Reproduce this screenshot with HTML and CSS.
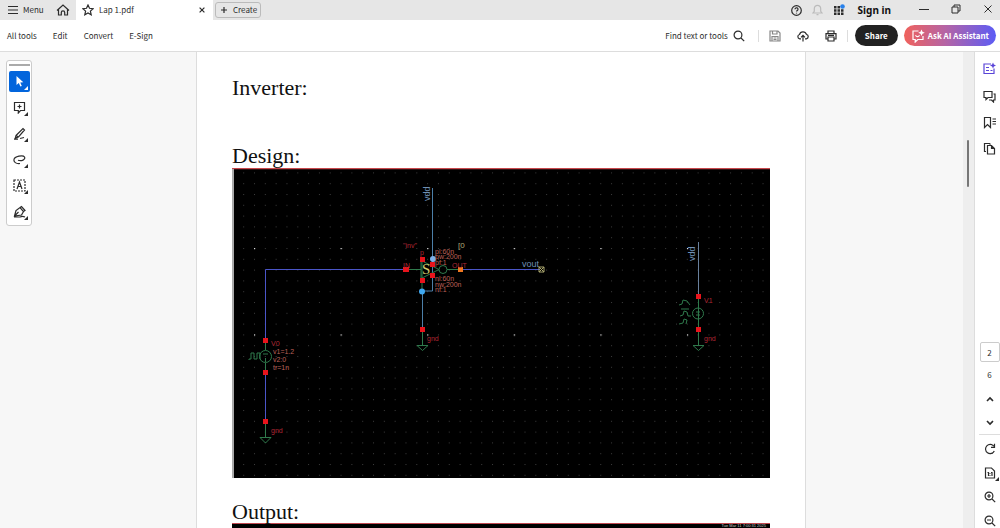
FILE: index.html
```html
<!DOCTYPE html>
<html lang="en">
<head>
    <meta charset="UTF-8">
    <meta name="viewport" content="width=device-width, initial-scale=1.0">
    <title>Lap 1.pdf</title>
    <link rel="stylesheet" href="styles.css">
</head>
<body>
    <header class="titlebar">
        <div class="app-menu">
            <button class="menu-btn">
                <svg width="10" height="10" viewBox="0 0 10 10"><path d="M0 1.500h10M0 5h10M0 8.500h10"/></svg>
                Menu
            </button>
            <button class="icon-btn" aria-label="Home">
                <svg width="14" height="14" viewBox="0 0 14 14"><path d="M1 7.500 7 2l6 5.500M2.500 6.500V12H5.300V9.500a1.700 1.700 0 0 1 3.400 0V12h2.800V6.500"/></svg>
            </button>
        </div>
        <div class="tab">
            <svg width="12" height="12" viewBox="0 0 12 12"><path d="m6 1 1.500 3.300 3.600.4-2.700 2.400.8 3.600L6 8.900l-3.200 1.800.8-3.600L.9 4.700l3.600-.4z"/></svg>
            <span class="tab-name">Lap 1.pdf</span>
            <button class="icon-btn" aria-label="Close tab">
                <svg width="6" height="6" viewBox="0 0 6 6"><path d="m.6.6 4.800 4.800M5.400.6.6 5.400"/></svg>
            </button>
        </div>
        <button class="create-btn">
            <svg width="8" height="8" viewBox="0 0 8 8"><path d="M4 1v6M1 4h6"/></svg>
            Create
        </button>
        <div class="account">
            <button class="icon-btn" aria-label="Help">
                <svg width="11" height="11" viewBox="0 0 11 11"><circle cx="5.500" cy="5.500" r="4.800"/><path d="M4 4.300a1.500 1.500 0 1 1 2.200 1.300c-.5.3-.7.5-.7 1M5.500 7.700v.8"/></svg>
            </button>
            <button class="icon-btn muted" aria-label="Notifications">
                <svg width="11" height="12" viewBox="0 0 11 12"><path d="M1 9h9L8.700 7.300V4.500a3.200 3.200 0 0 0-6.400 0v2.800zM4.500 10.700h2"/></svg>
            </button>
            <button class="icon-btn" aria-label="Apps">
                <svg class="solid" width="12" height="12" viewBox="0 0 12 12"><path d="M1 2h2.500v2.500H1zM4.500 2H7v2.500H4.500zM1 5.300h2.500v2.500H1zM4.500 5.300H7v2.500H4.500zM8 5.300h2.500v2.500H8zM1 8.600h2.500v2.500H1zM4.500 8.600H7v2.500H4.500zM8 8.600h2.500v2.500H8z"/><circle class="dot" cx="9.500" cy="2.500" r="2.300"/></svg>
            </button>
            <button class="sign-in">Sign in</button>
        </div>
        <div class="window-controls">
            <button class="icon-btn" aria-label="Minimize"><svg width="10" height="10" viewBox="0 0 10 10"><path d="M0 5.500h10"/></svg></button>
            <button class="icon-btn" aria-label="Restore"><svg width="10" height="10" viewBox="0 0 10 10"><path d="M1 3h6v6H1zM3 3V1h6v6H7"/></svg></button>
            <button class="icon-btn" aria-label="Close"><svg width="10" height="10" viewBox="0 0 10 10"><path d="m1.500 1.500 7 7M8.500 1.500l-7 7"/></svg></button>
        </div>
    </header>

    <nav class="toolbar">
        <div class="menus">
            <button>All tools</button>
            <button>Edit</button>
            <button>Convert</button>
            <button>E-Sign</button>
        </div>
        <button class="find-btn">
            Find text or tools
            <svg width="12" height="12" viewBox="0 0 12 12"><circle cx="5" cy="5" r="3.900"/><path d="m8 8 3.200 3.200"/></svg>
        </button>
        <div class="file-actions">
            <button class="icon-btn faded" aria-label="Save">
                <svg width="12" height="12" viewBox="0 0 12 12"><path d="M1 1h8l2 2v8H1zM3.500 1v3h4.500V1M3 11V6.500h6V11M4.500 8h3M4.500 9.500h3"/></svg>
            </button>
            <button class="icon-btn" aria-label="Upload">
                <svg width="12" height="12" viewBox="0 0 12 12"><path d="M4 8.800H2.700a2.200 2.200 0 0 1-.2-4.300 3.600 3.600 0 0 1 6.900-.2 2.300 2.300 0 0 1 0 4.500H8M6 11.500V5.500M4 7.400l2-2 2 2"/></svg>
            </button>
            <button class="icon-btn" aria-label="Print">
                <svg width="12" height="12" viewBox="0 0 12 12"><path d="M3 3.500V1h6v2.500M3 9H1V3.700h10V9H9M3 7h6v4H3zM3 5.300h6"/></svg>
            </button>
        </div>
        <button class="share-btn">Share</button>
        <button class="ai-btn">
            <svg width="14" height="14" viewBox="0 0 14 14"><path d="M7.500 2H2v8.500h2.200V13l2.600-2.500H12V7M4.500 6.200c1 2 3 2 4 0"/><path class="fill" d="m10.500.5 1 2.300 2.300 1-2.300 1-1 2.300-1-2.300-2.300-1 2.300-1z"/></svg>
            Ask AI Assistant
        </button>
    </nav>

    <main class="workspace">
        <aside class="quick-tools">
            <div class="palette">
                <div class="grip"></div>
                <button class="tool active" aria-label="Select">
                    <svg class="solid" width="13" height="13" viewBox="0 0 13 13"><path d="M3.500 1v9l2.300-2 1.600 3.500 1.400-.6L7.300 7.500l3-.3z"/></svg>
                </button>
                <button class="tool" aria-label="Add comment">
                    <svg width="13" height="13" viewBox="0 0 13 13"><path d="M1.500 1.500h10v8H7.500L5.300 12V9.500H1.500zM6.500 3.500v4M4.500 5.500h4"/></svg>
                </button>
                <button class="tool" aria-label="Highlight">
                    <svg width="13" height="13" viewBox="0 0 13 13"><path d="m3 8.500 7-7 1.500 1.500-6 7-3.200 1zM3 8.500 5.500 10M1 12.200h4M7 11.500l4-1"/></svg>
                </button>
                <button class="tool" aria-label="Draw">
                    <svg width="13" height="13" viewBox="0 0 13 13"><path d="M7 10.500C3 11 .5 9 1 6.500 1.500 3.500 10 1.500 11.500 4c1.300 2.700-3 4.500-6.500 3.300"/></svg>
                </button>
                <button class="tool" aria-label="Add text">
                    <svg width="13" height="13" viewBox="0 0 13 13"><path class="dashed" d="M1 1h11v11H1z"/><path d="m4 10 2.500-7L9 10M5 7.500h3"/></svg>
                </button>
                <button class="tool" aria-label="Sign">
                    <svg width="13" height="13" viewBox="0 0 13 13"><path d="M1.500 11 3 5.500 7 2.500l3.500 4-2 3.500zM1.500 11l4-4M7 2.500l1.500-1 3.500 4-1.500 1M1 12h6c2-1 3-1 5 0"/></svg>
                </button>
            </div>
        </aside>

        <section class="canvas">
            <article class="page">
                <h2>Inverter:</h2>
                <h2 class="spaced">Design:</h2>
                <figure class="schematic">
                    <svg viewBox="232 168 538 310" role="img" aria-label="Inverter schematic">
                        <defs>
                            <pattern id="grid" x="254" y="248" width="10.820" height="10.800" patternUnits="userSpaceOnUse"><rect width="1" height="1" fill="#3c3c3c"/></pattern>
                            <pattern id="major" x="254" y="248" width="86.600" height="86.400" patternUnits="userSpaceOnUse"><rect width="1.200" height="1.200" fill="#ddd"/></pattern>
                        </defs>
                        <rect x="232" y="168" width="538" height="310" fill="#000"/>
                        <rect x="236" y="172" width="532" height="304" fill="url(#grid)"/>
                        <rect x="250" y="240" width="510" height="100" fill="url(#major)"/>
                        <path d="M232 168.500h538" stroke="#c8474c" stroke-width="1.500"/>
                        <path d="M233 169v309" stroke="#aaa" stroke-width="2"/>

                        <!-- wires -->
                        <g class="wire">
                            <path d="M265.500 340v-70.500H405M460 269.500h80M265.500 373v48"/>
                            <path class="light" d="M432.500 188v71M422.500 292v37M432.500 259v32h-11"/>
                            <path class="pale" d="M698.500 242v54"/>
                        </g>

                        <!-- symbols -->
                        <g class="symbol">
                            <path d="M265.500 340v10M265.500 363v8M265.500 421v16M260 437.500h11l-5.500 5.500zM249 360v-1h2v-6h3v6h3v-6h3v6"/>
                            <circle cx="265.500" cy="356.500" r="6"/>
                            <path d="M263 354h5M265.500 358v4"/>
                            <path d="M405 269.500h16M421 261v17M422 259v33M422 261l17 8.500-17 8.500M447 269.500h13"/>
                            <circle cx="443" cy="269.500" r="4"/>
                            <path d="M422.500 329v16M417 345.500h11l-5.500 5z"/>
                            <path d="M698.500 296v33M698.500 329v16M693 345.500h11l-5.500 5z"/>
                            <circle cx="698" cy="313.500" r="5.500"/>
                            <path d="M696 312h4M696 315h4M679 305l3-1 1-4 4 1 3 4M681 309h8M680 316l3-1 1-4 3 1 1 4h3M679 324l4-1 1-4 3 1-1 4"/>
                        </g>

                        <!-- pins -->
                        <g class="pin">
                            <path d="M263 338h5v5h-5zM263 370h5v5h-5zM263 419h5v5h-5zM403 267h6v5h-6zM420 257h5v5h-5zM430 262h5v5h-5zM430 273h5v5h-5zM420 278h5v5h-5zM420 327h5v5h-5zM696 294h5v5h-5zM696 327h5v5h-5z"/>
                            <path class="orange" d="M458 267h5v5h-5z"/>
                        </g>
                        <circle cx="433" cy="259" r="3" fill="#7db0ea"/>
                        <circle cx="422" cy="291.500" r="3" fill="#3fa8f0"/>
                        <path class="terminal" d="M539 267h5v5h-5zM539 267l5 5M544 267l-5 5"/>

                        <!-- labels -->
                        <g class="net">
                            <text transform="translate(430 201) rotate(-90)">vdd</text>
                            <text transform="translate(695 261) rotate(-90)">vdd</text>
                            <text x="522" y="267">vout</text>
                        </g>
                        <g class="param">
                            <text x="273" y="354">v1=1.2</text>
                            <text x="273" y="362">v2:0</text>
                            <text x="273" y="370">tr=1n</text>
                            <text x="435" y="254">pl:60n</text>
                            <text x="435" y="259">pw:200n</text>
                            <text x="435" y="265">pf:1</text>
                            <text x="435" y="281">nl:60n</text>
                            <text x="435" y="287">nw:200n</text>
                            <text x="435" y="292">nf:1</text>
                        </g>
                        <g class="name">
                            <text x="271" y="346">V0</text>
                            <text x="271" y="433">gnd</text>
                            <text x="403" y="248">"inv"</text>
                            <text x="420" y="255">p</text>
                            <text x="403" y="268">IN</text>
                            <text x="452" y="268">OUT</text>
                            <text x="427" y="341">gnd</text>
                            <text x="704" y="303">V1</text>
                            <text x="704" y="341">gnd</text>
                        </g>
                        <text class="size" x="422" y="274">S</text>
                        <text class="index" x="458" y="248">[0</text>
                    </svg>
                </figure>
                <h2 class="after-figure">Output:</h2>
                <figure class="waveform"><figcaption>Tue Mar 11 7:00:31 2025</figcaption></figure>
            </article>
        </section>

        <div class="scrollbar"><div class="thumb"></div></div>

        <aside class="rail">
            <div class="panels">
                <button class="icon-btn ai" aria-label="AI summary">
                    <svg width="13" height="13" viewBox="0 0 13 13"><path d="M8 2H1v9.500h10V6.500M3 5.500h3M3 8.500h3M7.500 8.500h2"/><path class="fill" d="m10 .5.900 2.100 2.100.9-2.100.9L10 6.500l-.9-2.100L7 3.500l2.100-.9z"/></svg>
                </button>
                <button class="icon-btn" aria-label="Comments">
                    <svg width="13" height="13" viewBox="0 0 13 13"><path d="M1 1.500h8v6H5L3 9.500v-2H1zM10.500 4H12v6h-1.500v2l-2-2H6"/></svg>
                </button>
                <button class="icon-btn" aria-label="Bookmarks">
                    <svg width="13" height="13" viewBox="0 0 13 13"><path d="M1.500 1.500h6v10l-3-3-3 3zM9.500 3H13M9.500 5.500H13M9.500 8H13"/></svg>
                </button>
                <button class="icon-btn" aria-label="Pages">
                    <svg width="13" height="13" viewBox="0 0 13 13"><path d="M4.500 3.500h4l3 3V12h-7zM8.500 3.500v3h3M3 9.500H1.500v-8h5l1 1"/></svg>
                </button>
            </div>
            <div class="page-nav">
                <input type="text" value="2" aria-label="Page number">
                <span class="total">6</span>
                <button class="icon-btn" aria-label="Previous page"><svg class="bold" width="8" height="8" viewBox="0 0 8 8"><path d="m1 6 3-3 3 3"/></svg></button>
                <button class="icon-btn" aria-label="Next page"><svg class="bold" width="8" height="8" viewBox="0 0 8 8"><path d="m1 3 3 3 3-3"/></svg></button>
                <div class="view">
                    <button class="icon-btn" aria-label="Rotate"><svg width="12" height="12" viewBox="0 0 12 12"><path d="M10.300 8A4.600 4.600 0 1 1 9.800 3.200M10.500.8v3.500H7"/></svg></button>
                    <button class="icon-btn corner" aria-label="Fit page"><svg width="12" height="12" viewBox="0 0 12 12"><path d="M1.500 1h6l3 3v7h-9zM3.500 5.500h1V9M7 5.500h1V9M6 6v.8M6 8v.8"/></svg></button>
                    <button class="icon-btn" aria-label="Zoom in"><svg width="12" height="12" viewBox="0 0 12 12"><circle cx="5" cy="5" r="3.900"/><path d="m8 8 3.200 3.200M5 3v4M3 5h4"/></svg></button>
                    <button class="icon-btn" aria-label="Zoom out"><svg width="12" height="12" viewBox="0 0 12 12"><circle cx="5" cy="5" r="3.900"/><path d="m8 8 3.200 3.200M3 5h4"/></svg></button>
                </div>
            </div>
        </aside>
    </main>
</body>
</html>
```

FILE: styles.css
```css
* {
    box-sizing: border-box;
}
body {
    margin: 0;
    height: 100vh;
    display: flex;
    flex-direction: column;
    overflow: hidden;
    font-family: "Noto Sans CJK SC", "Open Sans", sans-serif;
    font-size: 8px;
    line-height: 12px;
    color: #2c2c2c;
    background: white;
}
button {
    display: flex;
    align-items: center;
    padding: 0;
    border: none;
    background: none;
    font: inherit;
    color: inherit;
    white-space: nowrap;
    cursor: pointer;
}
svg {
    display: block;
    flex: none;
    fill: none;
    stroke: currentColor;
    stroke-width: 1.2;
}
svg.solid,
svg .fill {
    fill: currentColor;
    stroke: none;
}
svg.bold {
    stroke-width: 1.6;
}
.icon-btn {
    justify-content: center;
}

/* title bar */
.titlebar {
    display: flex;
    align-items: center;
    flex: none;
    height: 20px;
    background: #e6e6e6;
}
.app-menu {
    display: flex;
    align-items: center;
    justify-content: space-between;
    width: 76px;
    padding: 0 6px 0 8px;
}
.menu-btn {
    gap: 5px;
}
.tab {
    display: flex;
    align-items: center;
    gap: 5px;
    width: 137px;
    height: 20px;
    padding: 0 8px 0 6px;
    background: white;
}
.tab-name {
    flex: 1;
}
.create-btn {
    gap: 5px;
    height: 16px;
    margin-left: 2px;
    padding: 0 3px 0 4px;
    border: 1px solid #bbb;
    border-radius: 3px;
}
.account {
    display: flex;
    align-items: center;
    gap: 10px;
    margin-left: auto;
}
.muted {
    color: #bbb;
}
.dot {
    fill: #2680eb;
}
.sign-in {
    margin-left: 3px;
    font-family: "Noto Sans", sans-serif;
    font-size: 10px;
    font-weight: bold;
    color: #111;
}
.window-controls {
    display: flex;
    gap: 22px;
    margin-left: 28px;
    padding: 0 7px 2px 0;
}
.window-controls svg {
    stroke-width: 1;
}

/* toolbar */
.toolbar {
    display: flex;
    align-items: center;
    flex: none;
    height: 32px;
    padding: 0 4px 0 7px;
    border-bottom: 1px solid #ddd;
}
.menus {
    display: flex;
    gap: 16px;
}
.find-btn {
    gap: 5px;
    margin-left: auto;
}
.file-actions {
    display: flex;
    gap: 16px;
    margin: 0 7px 0 13px;
    padding: 0 10px;
    border: solid #ddd;
    border-width: 0 1px;
}
.faded {
    color: #888;
}
.share-btn,
.ai-btn {
    height: 21px;
    border-radius: 11px;
    font-weight: bold;
    color: white;
}
.share-btn {
    padding: 0 10px;
    background: #222;
}
.ai-btn {
    gap: 3px;
    margin-left: 6px;
    padding: 0 7px;
    background: linear-gradient(90deg, #f0625c, #b564a5 45%, #5c5cf5);
}

/* workspace */
.workspace {
    display: flex;
    flex: 1;
    min-height: 0;
    background: #f7f7f7;
}
.quick-tools {
    flex: none;
    width: 39px;
    padding: 8px 7px 0 6px;
}
.palette {
    display: flex;
    flex-direction: column;
    align-items: center;
    gap: 5px;
    padding: 3px 0;
    border: 1px solid #ccc;
    border-radius: 3px;
    background: white;
}
.grip {
    width: 21px;
    height: 2px;
    background: #aaa;
}
.tool {
    position: relative;
    justify-content: center;
    width: 21px;
    height: 21px;
    border-radius: 2px;
}
.tool.active {
    color: white;
    background: #0265dc;
}
.tool::after,
.corner::after {
    content: "";
    position: absolute;
    right: 2px;
    bottom: 2px;
    border: 2px solid transparent;
    border-right-color: currentColor;
    border-bottom-color: currentColor;
}
.dashed {
    stroke-dasharray: 2 1;
}

/* document */
.canvas {
    flex: 1;
    min-width: 0;
    overflow: hidden;
}
.page {
    max-width: 610px;
    min-height: 100%;
    margin: 0 auto;
    padding: 22px 35px 0;
    border: solid #ddd;
    border-width: 0 1px;
    background: white;
}
h2 {
    margin: 0;
    font-family: "Liberation Serif", serif;
    font-size: 22px;
    font-weight: normal;
    line-height: 28px;
    color: #111;
}
.spaced {
    margin-top: 40px;
}
figure {
    margin: 0;
}
.schematic {
    margin-top: -2px;
}
.schematic svg {
    width: 100%;
    height: auto;
    stroke: none;
}
.after-figure {
    margin-top: 20px;
}
.waveform {
    height: 310px;
    margin-top: -3px;
    border-top: 1px solid #c04850;
    background: black;
}
.waveform figcaption {
    padding-right: 4px;
    font-family: "Liberation Sans", sans-serif;
    font-size: 4px;
    line-height: 4px;
    text-align: right;
    color: #ccc;
}
.wire {
    stroke: #4a55c8;
    stroke-width: 1;
}
.wire .light {
    stroke: #4c7fa8;
}
.wire .pale {
    stroke: #68809c;
}
.symbol {
    stroke: #2f7a4c;
    stroke-width: 1;
}
.pin {
    fill: #e8141c;
}
.pin .orange {
    fill: #f07820;
}
.terminal {
    stroke: #a8a46c;
    stroke-width: 1;
}
.schematic text {
    font-family: "Liberation Sans", sans-serif;
    font-size: 7px;
}
.schematic .net text {
    font-size: 9px;
    fill: #6f8fb4;
}
.param {
    fill: #bd6058;
}
.name {
    fill: #b02835;
}
.schematic .size {
    font-family: "Liberation Serif", serif;
    font-size: 15px;
    fill: #d6cd6c;
}
.schematic .index {
    font-size: 8px;
    fill: #b0ac78;
}

/* scrollbar and right rail */
.scrollbar {
    flex: none;
    width: 11px;
    padding: 88px 4px 0;
    background: #eee;
}
.thumb {
    width: 2px;
    height: 47px;
    border-radius: 1px;
    background: #777;
}
.rail {
    display: flex;
    flex-direction: column;
    justify-content: space-between;
    flex: none;
    width: 26px;
    padding-top: 10px;
    border-left: 1px solid #ddd;
    background: white;
}
.panels {
    display: flex;
    flex-direction: column;
    align-items: center;
    gap: 13px;
    padding-left: 4px;
}
.ai {
    padding-bottom: 2px;
    color: #5a45d8;
}
.page-nav {
    display: flex;
    flex-direction: column;
    align-items: center;
    gap: 15px;
    padding-left: 4px;
}
.page-nav input {
    width: 20px;
    height: 20px;
    padding: 0;
    border: 1px solid #ccc;
    border-radius: 2px;
    font: inherit;
    text-align: center;
    color: inherit;
}
.total {
    margin-top: -7px;
    line-height: 10px;
}
.view {
    display: flex;
    flex-direction: column;
    align-items: center;
    gap: 12px;
    width: 100%;
    margin-top: -7px;
    padding: 8px 0 1px;
    border-top: 1px solid #ddd;
}
.corner {
    position: relative;
}
.corner::after {
    right: -3px;
    bottom: -2px;
}
```
